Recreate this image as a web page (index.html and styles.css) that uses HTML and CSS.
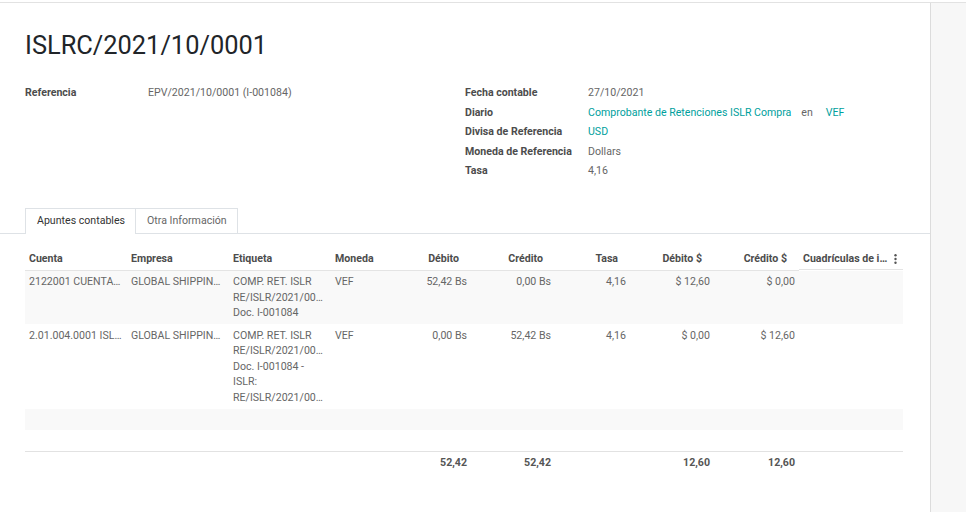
FILE: index.html
```html
<!DOCTYPE html>
<html lang="es">
<head>
<meta charset="utf-8">
<title>ISLRC/2021/10/0001</title>
<link rel="stylesheet" href="styles.css">
</head>
<body>
<div class="app">
  <main class="sheet">
    <h1 class="title">ISLRC/2021/10/0001</h1>
    <div class="groups">
      <div class="group">
        <div class="field"><span class="label">Referencia</span><span class="value">EPV/2021/10/0001 (I-001084)</span></div>
      </div>
      <div class="group">
        <div class="field"><span class="label">Fecha contable</span><span class="value">27/10/2021</span></div>
        <div class="field"><span class="label">Diario</span><span class="value"><a class="link">Comprobante de Retenciones ISLR Compra</a><span class="en">en</span><a class="link">VEF</a></span></div>
        <div class="field"><span class="label">Divisa de Referencia</span><span class="value"><a class="link">USD</a></span></div>
        <div class="field"><span class="label">Moneda de Referencia</span><span class="value">Dollars</span></div>
        <div class="field"><span class="label">Tasa</span><span class="value">4,16</span></div>
      </div>
    </div>
    <ul class="tabs">
      <li class="tab active">Apuntes contables</li>
      <li class="tab">Otra Información</li>
    </ul>
    <table class="lines">
      <colgroup>
        <col class="c-txt"><col class="c-txt"><col class="c-txt"><col class="c-mon">
        <col class="c-deb"><col class="c-cre"><col class="c-tasa"><col class="c-debu"><col class="c-creu"><col class="c-grid">
      </colgroup>
      <thead>
        <tr>
          <th>Cuenta</th><th>Empresa</th><th>Etiqueta</th><th>Moneda</th>
          <th class="num">Débito</th><th class="num">Crédito</th><th class="num">Tasa</th>
          <th class="num">Débito $</th><th class="num">Crédito $</th>
          <th class="last"><span>Cuadrículas de i…</span><svg class="kebab" width="3" height="10" viewBox="0 0 3 10"><circle cx="1.5" cy="1.3" r="1.2"/><circle cx="1.5" cy="5" r="1.2"/><circle cx="1.5" cy="8.7" r="1.2"/></svg></th>
        </tr>
      </thead>
      <tbody>
        <tr class="odd">
          <td class="cut">2122001 CUENTA…</td><td class="cut">GLOBAL SHIPPIN…</td>
          <td><div class="l">COMP. RET. ISLR</div><div class="l">RE/ISLR/2021/00…</div><div class="l">Doc. I-001084</div></td>
          <td>VEF</td><td class="num">52,42 Bs</td><td class="num">0,00 Bs</td><td class="num">4,16</td><td class="num">$ 12,60</td><td class="num">$ 0,00</td><td></td>
        </tr>
        <tr>
          <td class="cut">2.01.004.0001 ISL…</td><td class="cut">GLOBAL SHIPPIN…</td>
          <td><div class="l">COMP. RET. ISLR</div><div class="l">RE/ISLR/2021/00…</div><div class="l">Doc. I-001084 -</div><div class="l">ISLR:</div><div class="l">RE/ISLR/2021/00…</div></td>
          <td>VEF</td><td class="num">0,00 Bs</td><td class="num">52,42 Bs</td><td class="num">4,16</td><td class="num">$ 0,00</td><td class="num">$ 12,60</td><td></td>
        </tr>
        <tr class="odd empty"><td colspan="10"></td></tr>
        <tr class="empty"><td colspan="10"></td></tr>
      </tbody>
      <tfoot>
        <tr>
          <td></td><td></td><td></td><td></td>
          <td class="num">52,42</td><td class="num">52,42</td><td></td><td class="num">12,60</td><td class="num">12,60</td><td></td>
        </tr>
      </tfoot>
    </table>
  </main>
  <aside class="side"></aside>
</div>
</body>
</html>
```
FILE: styles.css
```css
* { box-sizing: border-box; }
html, body { margin: 0; padding: 0; background: #fff; }
body {
  font-family: Roboto, "Liberation Sans", sans-serif;
  font-size: 10.6px;
  color: #666;
  height: 512px;
  overflow: hidden;
}
.app {
  display: flex;
  margin-top: 2px;
  border-top: 1px solid #e2e2e2;
  height: 510px;
}
.sheet {
  width: 930px;
  padding: 0 25px;
  background: #fff;
}
.side {
  flex: 1;
  background: #f7f7f7;
  border-left: 1px solid #dcdcdc;
}
.title {
  margin: 26px 0 0;
  font-size: 25.4px;
  line-height: 32px;
  font-weight: 400;
  color: #212529;
}
.groups {
  display: flex;
  margin-top: 22px;
}
.group { width: 440px; }
.field {
  display: flex;
  line-height: 19.6px;
}
.label {
  width: 123px;
  flex: none;
  font-weight: 700;
  color: #4c4c4c;
}
.value { color: #666; }
.link { color: #00a09d; }
.en { margin: 0 13px 0 10px; color: #666; }
.tabs {
  list-style: none;
  margin: 27px -25px 0;
  padding: 0 0 0 25px;
  display: flex;
  border-bottom: 1px solid #dee2e6;
}
.tab {
  padding: 0 10px 0 11px;
  line-height: 24px;
  border: 1px solid #dee2e6;
  border-bottom: none;
  color: #666;
  background: #fff;
}
.tab + .tab { border-left: none; }
.tab.active {
  color: #333;
  position: relative;
  top: 1px;
  margin-top: -1px;
  padding-bottom: 1px;
}
.lines {
  margin-top: 14px;
  width: 878px;
  table-layout: fixed;
  border-collapse: collapse;
}
.c-txt { width: 102px; }
.c-mon { width: 60px; }
.c-deb { width: 80px; }
.c-cre { width: 84px; }
.c-tasa { width: 75px; }
.c-debu { width: 84px; }
.c-creu { width: 85px; }
.c-grid { width: 104px; }
th, td {
  padding: 3px 4px;
  line-height: 15.5px;
  text-align: left;
  vertical-align: top;
  white-space: nowrap;
  overflow: hidden;
}
th {
  font-weight: 700;
  color: #4c4c4c;
  border-bottom: 1px solid #e4e4e4;
}
th.num { text-align: right; padding-right: 12px; }
td.num { text-align: right; }
th.last {
  display: flex;
  justify-content: space-between;
  align-items: center;
  padding-right: 6px;
}
.kebab { fill: #555; }
tbody tr { border-top: 1px solid #fff; }
tbody tr.odd td { background: #f9f9f9; }
tbody tr.empty td { height: 21.5px; }
.cut { text-overflow: clip; }
.l { white-space: nowrap; }
tfoot td {
  font-weight: 700;
  color: #555;
  border-top: 1px solid #e2e2e2;
  padding-top: 3px;
}
```
